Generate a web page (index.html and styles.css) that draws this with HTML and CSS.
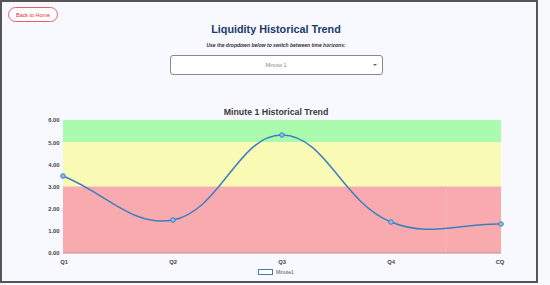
FILE: index.html
```html
<!DOCTYPE html>
<html lang="en">
<head>
  <meta charset="UTF-8">
  <title>Liquidity Historical Trend</title>
  <link rel="stylesheet" href="styles.css">
</head>
<body>
  <div class="container">
    <button class="back-btn">Back to Home</button>

    <div class="header">
      <h1>Liquidity Historical Trend</h1>
      <p class="hint">Use the dropdown below to switch between time horizons:</p>
      <div class="select">
        <span>Minute 1</span>
        <span class="caret"></span>
      </div>
    </div>

    <svg class="chart" width="534" height="180" viewBox="2 100 534 180">
      <text class="chart-title" x="276" y="114.5">Minute 1 Historical Trend</text>

      <!-- zones -->
      <rect x="63" y="120" width="438" height="22.2" fill="#aafbad"/>
      <rect x="63" y="142.2" width="438" height="44.3" fill="#f9fbb5"/>
      <rect x="63" y="186.5" width="438" height="66.5" fill="#f8aaae"/>
      <line x1="446" y1="186.5" x2="446" y2="253" stroke="#fbb8bb" stroke-width="1"/>
      <line x1="63" y1="253" x2="501" y2="253" stroke="#c98a8c" stroke-width="1"/>

      <g class="y-labels">
        <text x="59.5" y="122">6.00</text>
        <text x="59.5" y="144.5">5.00</text>
        <text x="59.5" y="166.5">4.00</text>
        <text x="59.5" y="188.5">3.00</text>
        <text x="59.5" y="211">2.00</text>
        <text x="59.5" y="233">1.00</text>
        <text x="59.5" y="255">0.00</text>
      </g>

      <g class="x-labels">
        <text x="64" y="264">Q1</text>
        <text x="173" y="264">Q2</text>
        <text x="282" y="264">Q3</text>
        <text x="391" y="264">Q4</text>
        <text x="500" y="264">CQ</text>
      </g>

      <path class="line" d="M63,176 C107,193.6 132.6,227.6 173,220 C220.2,211.2 238.6,134.6 282,135 C325.8,135.4 342,202.1 391,222 C429.6,237.7 457,223.2 501,224"/>
      <g class="points">
        <circle cx="63" cy="176" r="2.3"/>
        <circle cx="173" cy="220" r="2.3"/>
        <circle cx="282" cy="135" r="2.3"/>
        <circle cx="391" cy="222" r="2.3"/>
        <circle cx="501" cy="224" r="2.3"/>
      </g>

      <rect class="legend-box" x="258.5" y="269.5" width="14" height="5"/>
      <text class="legend-text" x="276" y="274">Minute1</text>
    </svg>
  </div>
</body>
</html>
```

FILE: styles.css
```css
body {
  margin: 0;
  background: #f8f9fd;
  font-family: 'Liberation Sans', Arial, sans-serif;
}

.container {
  width: 538px;
  height: 283px;
  box-sizing: border-box;
  border: 2px solid #555;
  background: #f8f9ff;
  padding: 5px 0 0 0;
}

.back-btn {
  display: block;
  margin-left: 6px;
  width: 50px;
  height: 15px;
  padding: 0;
  background: #fff;
  border: 1px solid #e5606f;
  border-radius: 8px;
  color: #d9304a;
  font-family: 'Liberation Sans', Arial, sans-serif;
  font-size: 5.4px;
  cursor: pointer;
}

.header {
  padding-left: 14px;
  display: flex;
  flex-direction: column;
  align-items: center;
}

h1 {
  margin: 0;
  font-size: 10.8px;
  line-height: 14px;
  color: #1b3a6b;
}

.hint {
  margin: 5px 0 0;
  font-size: 5px;
  line-height: 8px;
  font-style: italic;
  font-weight: bold;
  color: #333;
}

.select {
  margin-top: 6px;
  width: 213px;
  height: 20px;
  box-sizing: border-box;
  border: 1.5px solid #8a8a8a;
  border-radius: 3px;
  background: #fff;
  display: flex;
  align-items: center;
  justify-content: center;
  position: relative;
  font-size: 5.5px;
  color: #888;
}

.caret {
  position: absolute;
  right: 5px;
  top: 8px;
  border-left: 2px solid transparent;
  border-right: 2px solid transparent;
  border-top: 2px solid #666;
}

.chart {
  display: block;
  margin-top: 25px;
}

.chart-title {
  font-size: 8.8px;
  font-weight: bold;
  fill: #3a3a3a;
  text-anchor: middle;
}

.y-labels text {
  font-size: 5.8px;
  font-weight: bold;
  fill: #444;
  text-anchor: end;
}

.x-labels text {
  font-size: 5.8px;
  font-weight: bold;
  fill: #444;
  text-anchor: middle;
}

.line {
  fill: none;
  stroke: #3b7fc1;
  stroke-width: 1.5;
}

.points circle {
  fill: #8fbde6;
  stroke: #3b7fc1;
  stroke-width: 1;
}

.legend-box {
  fill: #fff;
  stroke: #3b7fc1;
  stroke-width: 1;
}

.legend-text {
  font-size: 5px;
  fill: #555;
}
```
